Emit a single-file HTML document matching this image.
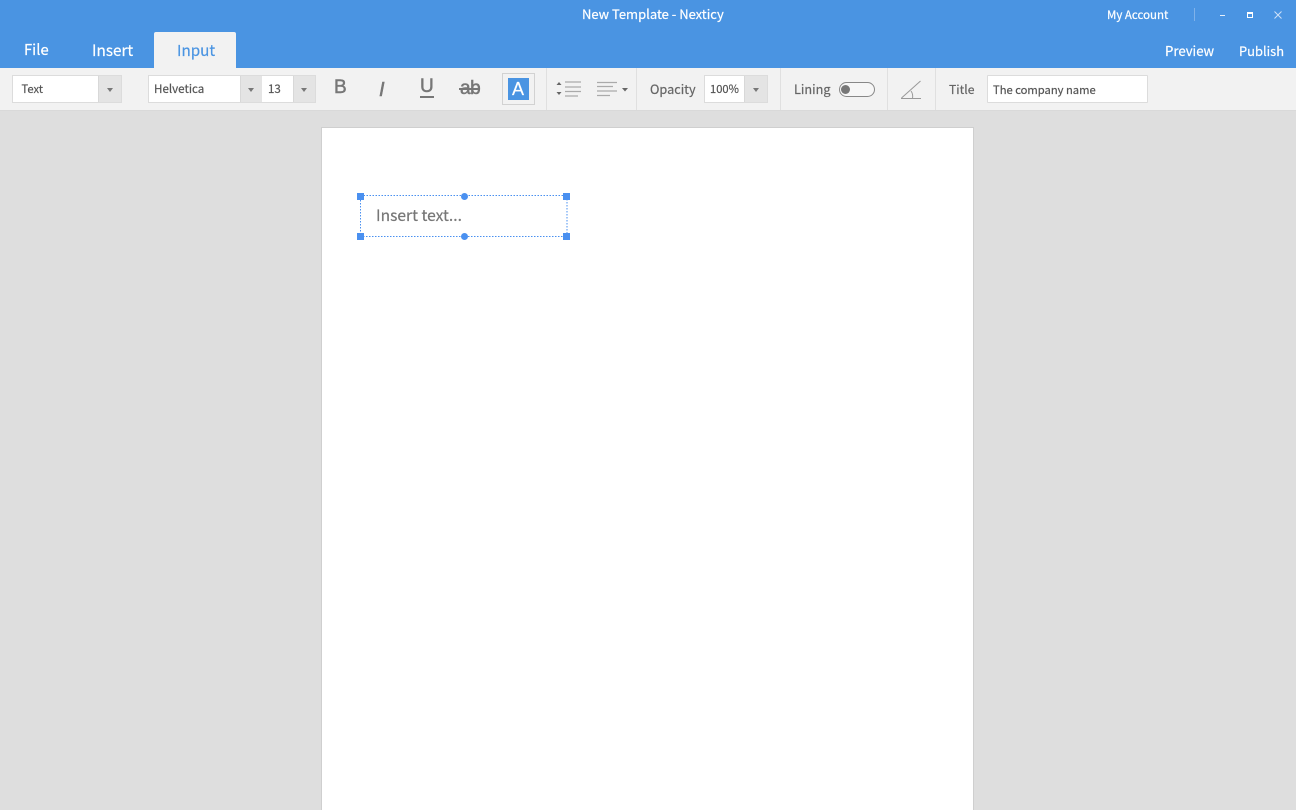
<!DOCTYPE html>
<html><head><meta charset="utf-8">
<style>
html,body{margin:0;padding:0;width:1296px;height:810px;overflow:hidden;background:#dedede}
body{position:relative;font-family:"Noto Sans CJK SC","Liberation Sans",sans-serif;color:#666}
.a{position:absolute;white-space:nowrap;line-height:20px;-webkit-text-stroke:.2px currentColor}
.b{position:absolute;box-sizing:border-box}
.arr{position:absolute;width:0;height:0;border-left:3px solid transparent;border-right:3px solid transparent;border-top:4px solid #777}
.sel{position:absolute;box-sizing:border-box;border:1px solid #dcdcdc;background:#fff}
.drop{position:absolute;background:#e4e4e4;box-sizing:border-box;border-left:1px solid #d8d8d8}
.sep{position:absolute;top:68px;width:1px;height:42px;background:#e0e0e0}
.w{color:#fff}
.h{position:absolute;width:7px;height:7px;background:#4a90f0}
.r{border-radius:50%}
.ic{font-family:"Liberation Sans",sans-serif;color:#777;-webkit-text-stroke:.5px #777}
</style></head><body>
<div class="b" style="left:0;top:0;width:1296px;height:68px;background:#4a94e2"></div>
<div class="a w" style="left:582px;top:4px;font-size:13px;">New Template - Nexticy</div>
<div class="a w" style="left:1107px;top:5px;font-size:11.500px;">My Account</div>
<div class="b" style="left:1194px;top:8px;width:1px;height:13px;background:#7fb2ea"></div>
<div class="b" style="left:1220px;top:15px;width:5px;height:1px;background:#e4effb"></div>
<div class="b" style="left:1247px;top:12px;width:6px;height:6px;border:1.500px solid #fff;border-top-width:2px"></div>
<svg class="b" style="left:1274px;top:11px" width="8" height="8" viewBox="0 0 8 8"><path d="M.5.5l7 7M7.5.5l-7 7" stroke="#cfe2f7" stroke-width="1" fill="none"/></svg>

<div class="a w" style="left:24px;top:40px;font-size:14.800px;">File</div>
<div class="a w" style="left:92px;top:40px;font-size:15.300px;">Insert</div>
<div class="b" style="left:154px;top:32px;width:82px;height:36px;background:#f2f2f2;border-radius:2px 2px 0 0"></div>
<div class="a" style="left:177px;top:40px;font-size:15.200px;color:#4a94e2">Input</div>
<div class="a w" style="left:1165px;top:41px;font-size:13.200px;">Preview</div>
<div class="a w" style="left:1239px;top:41px;font-size:12.900px;">Publish</div>

<div class="b" style="left:0;top:68px;width:1296px;height:43px;background:#f2f2f2;border-bottom:1px solid #d9d9d9"></div>

<div class="sel" style="left:12px;top:75px;width:110px;height:28px"></div>
<div class="drop" style="left:98px;top:76px;width:23px;height:26px"></div>
<div class="arr" style="left:107px;top:88px"></div>
<div class="a" style="left:21.500px;top:79px;font-size:11.200px;color:#555">Text</div>

<div class="sel" style="left:148px;top:75px;width:168px;height:28px"></div>
<div class="drop" style="left:240px;top:76px;width:22px;height:26px"></div>
<div class="arr" style="left:248px;top:88px"></div>
<div class="drop" style="left:293px;top:76px;width:22px;height:26px"></div>
<div class="arr" style="left:301px;top:88px"></div>
<div class="a" style="left:154px;top:79px;font-size:11.600px;color:#555">Helvetica</div>
<div class="a" style="left:268px;top:79px;font-size:11.500px;color:#555">13</div>

<div class="a ic" style="left:334px;top:78px;font-size:19px;">B</div>
<div class="a ic" style="left:379px;top:80px;font-size:20px;font-style:italic">I</div>
<div class="a ic" style="left:420px;top:77px;font-size:19px;">U</div>
<div class="b" style="left:420px;top:96px;width:14px;height:2px;background:#777"></div>
<div class="a ic" style="left:460px;top:79px;font-size:19px;letter-spacing:-.5px;">ab</div>
<div class="b" style="left:459px;top:88px;width:21px;height:1.500px;background:#777"></div>

<div class="b" style="left:502px;top:73px;width:33px;height:32px;border:1px solid #d2d2d2"></div>
<div class="b" style="left:508px;top:78px;width:21px;height:22px;background:#4a94e2"></div>
<div class="a" style="left:512px;top:79px;font-size:18px;color:#fff;font-family:'Liberation Sans',sans-serif">A</div>

<div class="sep" style="left:546px"></div>
<svg class="b" style="left:555px;top:80px" width="28" height="18" viewBox="0 0 28 18"><path d="M1.500 5L4 2l2.500 3zM1.500 12L4 15l2.500-3z" fill="#666"/><path d="M10 2h16M10 7h16M10 11.500h16M10 16h13" stroke="#aaa" stroke-width="1.300" fill="none"/></svg>
<svg class="b" style="left:597px;top:81px" width="32" height="17" viewBox="0 0 32 17"><path d="M0 1.500h20M0 5.500h16M0 10h20M0 14.500h13" stroke="#aaa" stroke-width="1.300" fill="none"/><path d="M25 7h6l-3 3.500z" fill="#666"/></svg>
<div class="sep" style="left:636px"></div>

<div class="a" style="left:650px;top:79px;font-size:12.700px;">Opacity</div>
<div class="sel" style="left:704px;top:75px;width:64px;height:28px"></div>
<div class="drop" style="left:744px;top:76px;width:23px;height:26px"></div>
<div class="arr" style="left:753px;top:88px"></div>
<div class="a" style="left:710px;top:79px;font-size:11.200px;color:#555">100%</div>
<div class="sep" style="left:780px"></div>

<div class="a" style="left:794px;top:79px;font-size:12.700px;">Lining</div>
<div class="b" style="left:839px;top:82px;width:36px;height:15px;border:1px solid #888;border-radius:8px;background:#f6f6f6"></div>
<div class="b r" style="left:841px;top:85px;width:9px;height:9px;background:#777"></div>
<div class="sep" style="left:887px"></div>

<svg class="b" style="left:900px;top:80px" width="22" height="20" viewBox="0 0 22 20"><path d="M1 18.500h20M1.500 18L20.500 1M11 11c1.500 2 2 4.500 1.500 7.500" stroke="#999" stroke-width="1" fill="none"/></svg>
<div class="sep" style="left:935px"></div>

<div class="a" style="left:949px;top:79px;font-size:12.200px;">Title</div>
<div class="sel" style="left:987px;top:75px;width:161px;height:28px;border-radius:1px"></div>
<div class="a" style="left:993px;top:80px;font-size:11.200px;color:#555">The company name</div>

<div class="b" style="left:321px;top:127px;width:653px;height:683px;background:#fff;border:1px solid #cfcfcf;border-bottom:0"></div>

<svg class="b" style="left:360px;top:195px" width="208" height="42" viewBox="0 0 208 42"><rect x=".5" y=".5" width="206.500" height="41" fill="none" stroke="#4a90f0" stroke-width="1" stroke-dasharray="1.500 1.500"/></svg>
<div class="a" style="left:376px;top:205px;font-size:15.600px;color:#777">Insert text...</div>
<div class="h" style="left:357px;top:193px"></div>
<div class="h" style="left:563px;top:193px"></div>
<div class="h" style="left:357px;top:233px"></div>
<div class="h" style="left:563px;top:233px"></div>
<div class="h r" style="left:460.500px;top:193px"></div>
<div class="h r" style="left:460.500px;top:233px"></div>
</body></html>
